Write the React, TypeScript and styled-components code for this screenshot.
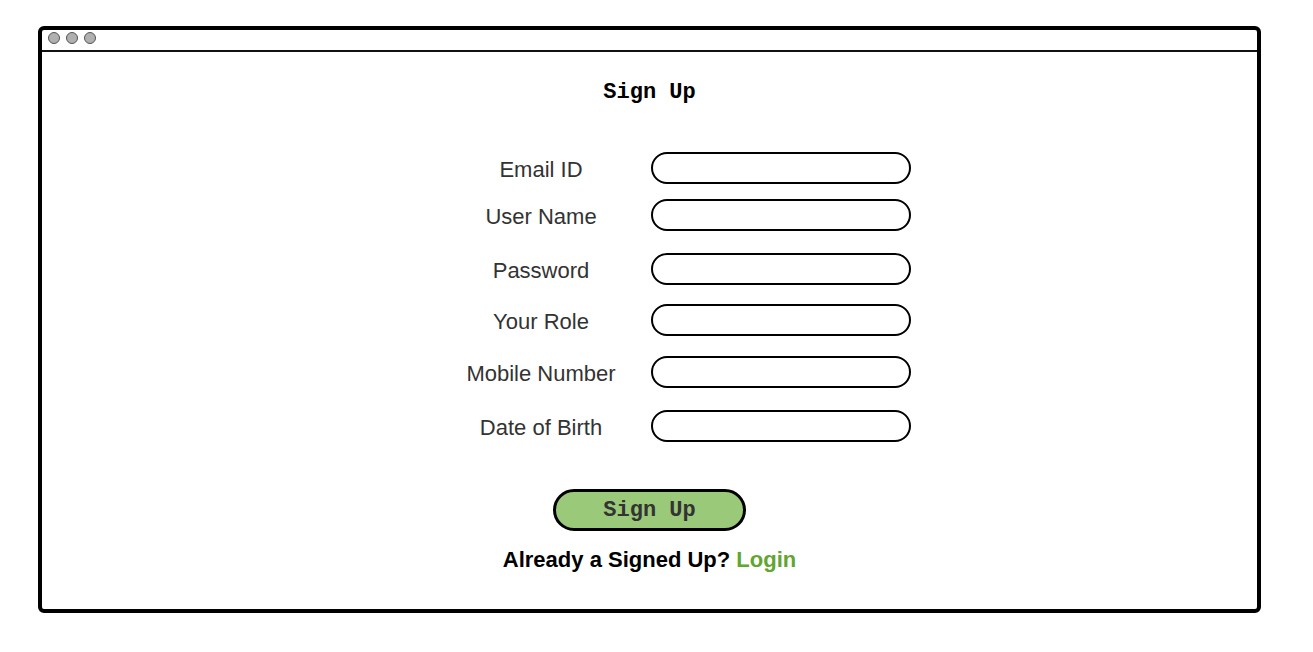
import React from "react";
import styled, { createGlobalStyle } from "styled-components";

const Global = createGlobalStyle`
  html, body { margin: 0; padding: 0; background: #ffffff; }
  body { font-family: "Liberation Sans", Arial, sans-serif; }
`;

const Page = styled.div`
  padding: 26px 0 0 38px;
  width: 1313px;
  height: 652px;
  box-sizing: border-box;
`;

const Frame = styled.div`
  width: 1223px;
  height: 587px;
  box-sizing: border-box;
  border: 4px solid #000;
  border-radius: 6px;
  display: flex;
  flex-direction: column;
  background: #fff;
`;

const TopBar = styled.div`
  height: 22px;
  box-sizing: border-box;
  display: flex;
  align-items: flex-start;
  gap: 6px;
  padding: 2px 0 0 6px;
  border-bottom: 2px solid #111;
`;

const Dot = styled.span`
  width: 10px;
  height: 10px;
  border-radius: 50%;
  background: #b0b0b0;
  border: 1.5px solid #555;
`;

const Content = styled.div`
  flex: 1;
  display: flex;
  flex-direction: column;
  align-items: center;
`;

const Title = styled.h1`
  margin: 29px 0 0;
  font-family: "Liberation Mono", "Courier New", monospace;
  font-weight: bold;
  font-size: 22px;
  line-height: 24px;
  color: #000;
`;

const Form = styled.div`
  margin-top: 47px;
  padding-left: 53px;
  display: flex;
  flex-direction: column;
`;

const Row = styled.div<{ $top: number }>`
  display: grid;
  grid-template-columns: 200px 260px;
  column-gap: 10px;
  align-items: center;
  margin-top: ${(p) => p.$top}px;
`;

const Label = styled.label`
  text-align: center;
  font-size: 22px;
  line-height: 24px;
  padding-top: 4px;
  color: #333;
`;

const Input = styled.div`
  height: 32px;
  box-sizing: border-box;
  border: 2px solid #000;
  border-radius: 16px;
  background: #fff;
`;

const Button = styled.button`
  margin-top: 47px;
  width: 193px;
  height: 42px;
  box-sizing: border-box;
  border: 3px solid #000;
  border-radius: 21px;
  background: #9bc97a;
  font-family: "Liberation Mono", "Courier New", monospace;
  font-weight: bold;
  font-size: 22px;
  color: #333;
  padding: 0;
  cursor: pointer;
`;

const Footer = styled.p`
  margin: 16px 0 0;
  font-size: 22px;
  font-weight: bold;
  color: #000;
`;

const LoginLink = styled.a`
  color: #62a531;
  text-decoration: none;
`;

const fields: { label: string; top: number }[] = [
  { label: "Email ID", top: 0 },
  { label: "User Name", top: 15 },
  { label: "Password", top: 22 },
  { label: "Your Role", top: 19 },
  { label: "Mobile Number", top: 20 },
  { label: "Date of Birth", top: 22 },
];

export default function App() {
  return (
    <>
      <Global />
      <Page>
        <Frame>
          <TopBar>
            <Dot />
            <Dot />
            <Dot />
          </TopBar>
          <Content>
            <Title>Sign Up</Title>
            <Form>
              {fields.map((f) => (
                <Row key={f.label} $top={f.top}>
                  <Label>{f.label}</Label>
                  <Input />
                </Row>
              ))}
            </Form>
            <Button>Sign Up</Button>
            <Footer>
              Already a Signed Up? <LoginLink href="#">Login</LoginLink>
            </Footer>
          </Content>
        </Frame>
      </Page>
    </>
  );
}
